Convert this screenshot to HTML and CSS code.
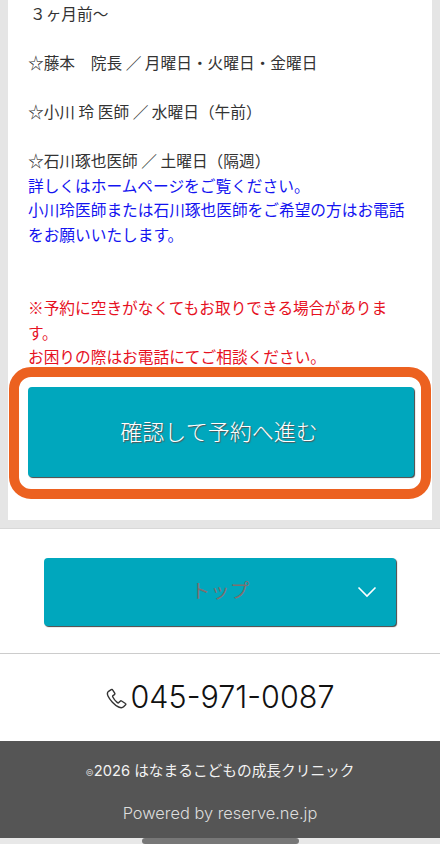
FILE: index.html
```html
<!DOCTYPE html>
<html lang="ja">
<head>
  <meta charset="UTF-8">
  <meta name="viewport" content="width=device-width, initial-scale=1.0">
  <title>はなまるこどもの成長クリニック</title>
  <link rel="stylesheet" href="styles.css">
</head>
<body>

  <div class="main">
    <div class="card">
      <p class="note">
        <span class="first-line">３ヶ月前～</span><br>
        <br>
        ☆藤本　院長 ／ 月曜日・火曜日・金曜日<br>
        <br>
        ☆小川 玲 医師 ／ 水曜日（午前）<br>
        <br>
        ☆石川琢也医師 ／ 土曜日（隔週）<br>
        <span class="blue">詳しくはホームページをご覧ください。<br>
        小川玲医師または石川琢也医師をご希望の方はお電話をお願いいたします。</span><br>
        <br>
        <br>
        <span class="red">※予約に空きがなくてもお取りできる場合があります。<br>
        お困りの際はお電話にてご相談ください。</span>
      </p>
      <div class="confirm">
        <button class="btn btn-confirm">確認して予約へ進む</button>
        <div class="frame"></div>
      </div>
    </div>
  </div>

  <div class="nav">
    <div class="btn btn-select">
      <span class="select-text">トップ</span>
      <svg class="chevron" width="20" height="12" viewBox="0 0 20 12">
        <path d="M1.5 1.5 L10 10 L18.5 1.5" fill="none" stroke="#fff" stroke-width="1.6"/>
      </svg>
    </div>
  </div>

  <div class="tel">
    <svg class="tel-icon" width="21" height="21" viewBox="0 0 21 21">
      <path d="M5.2 1.6 L2.6 3.3 C1.2 4.3 1.2 6.2 2 8 C3.6 11.6 8.6 17.2 12.6 19 C14.8 20 16.6 19.8 17.6 18.8 L19.6 16.8 C20 16.4 19.9 15.8 19.4 15.5 L15.6 13 C15.1 12.7 14.6 12.8 14.2 13.2 L12.8 14.6 C12.4 15 11.9 15 11.4 14.6 C9.6 13.2 7.8 11 6.8 9 C6.5 8.4 6.6 7.9 7 7.6 L8.4 6.6 C8.9 6.2 9 5.7 8.7 5.2 L6.6 1.9 C6.3 1.4 5.7 1.3 5.2 1.6 Z" fill="none" stroke="#333" stroke-width="1.4" stroke-linejoin="round"/>
    </svg>
    <span>045-971-0087</span>
  </div>

  <div class="footer">
    <p class="copy"><span class="copy-mark">©</span>2026 はなまるこどもの成長クリニック</p>
    <p class="powered">Powered by reserve.ne.jp</p>
  </div>

  <div class="home-bar"><span class="thumb"></span></div>

</body>
</html>
```

FILE: styles.css
```css
html, body {
  margin: 0;
  padding: 0;
}
body {
  width: 440px;
  height: 844px;
  overflow: hidden;
  background-color: #fff;
  color: #333;
  font-family: "Noto Sans CJK JP", "Noto Sans", sans-serif;
}

.main {
  background-color: #e5e5e5;
  padding: 0 8px 8px 8px;
  border-bottom: 1px solid #d8d8d8;
}
.card {
  background-color: #fff;
  height: 520px;
  padding: 2px 20px 0 20px;
  box-sizing: border-box;
}
.note {
  margin: 0;
  font-size: 15.7px;
  line-height: 24.5px;
  height: 365px;
}
.first-line {
  padding-left: 2px;
}
.blue {
  color: #1414f0;
}
.red {
  color: #e6111f;
}

.btn {
  display: flex;
  align-items: center;
  justify-content: center;
  background-color: #00a7bd;
  border: none;
  border-radius: 4px;
  box-shadow: 1px 1px 1px #444;
  box-sizing: border-box;
  font-family: inherit;
}

.confirm {
  position: relative;
  margin-top: 20px;
  width: 386px;
}
.btn-confirm {
  width: 100%;
  height: 90px;
  padding: 0 4px 4px 0;
  color: #fff;
  font-size: 22px;
  font-weight: 300;
  text-shadow: 1px 1px 1px #555;
}
.frame {
  position: absolute;
  top: -20px;
  left: -19px;
  right: -17px;
  bottom: -22px;
  border: 10px solid #ec6120;
  border-radius: 22px;
}

.nav {
  height: 125px;
  padding-top: 29px;
  box-sizing: border-box;
  border-bottom: 1px solid #ccc;
}
.btn-select {
  position: relative;
  width: 352px;
  height: 68px;
  margin-left: 44px;
  padding-bottom: 6px;
}
.select-text {
  color: #7d7070;
  font-size: 19.5px;
}
.chevron {
  position: absolute;
  right: 19px;
  top: 28px;
}

.tel {
  height: 87px;
  display: flex;
  align-items: center;
  justify-content: center;
  gap: 4px;
  font-family: Inter, "Noto Sans CJK JP", sans-serif;
  font-size: 30.5px;
  font-weight: 300;
  color: #111;
  padding: 0 0 2px 0;
  box-sizing: border-box;
}
.tel-icon {
  margin-top: 3px;
}

.footer {
  height: 97px;
  background-color: #555;
  text-align: center;
  color: #f2f2f2;
  font-family: Inter, "Noto Sans CJK JP", sans-serif;
}
.copy {
  margin: 0;
  padding-top: 19px;
  font-size: 14.7px;
  line-height: 22px;
}
.copy-mark {
  font-size: 9px;
  color: #ccc;
}
.powered {
  margin: 0;
  padding-top: 18px;
  font-size: 16.4px;
  font-weight: 300;
  line-height: 22px;
  color: #ddd;
}

.home-bar {
  height: 6px;
  background-color: #e8e8e8;
  display: flex;
  justify-content: center;
}
.thumb {
  width: 157px;
  height: 6px;
  border-radius: 3px;
  background-color: #777;
}
```
